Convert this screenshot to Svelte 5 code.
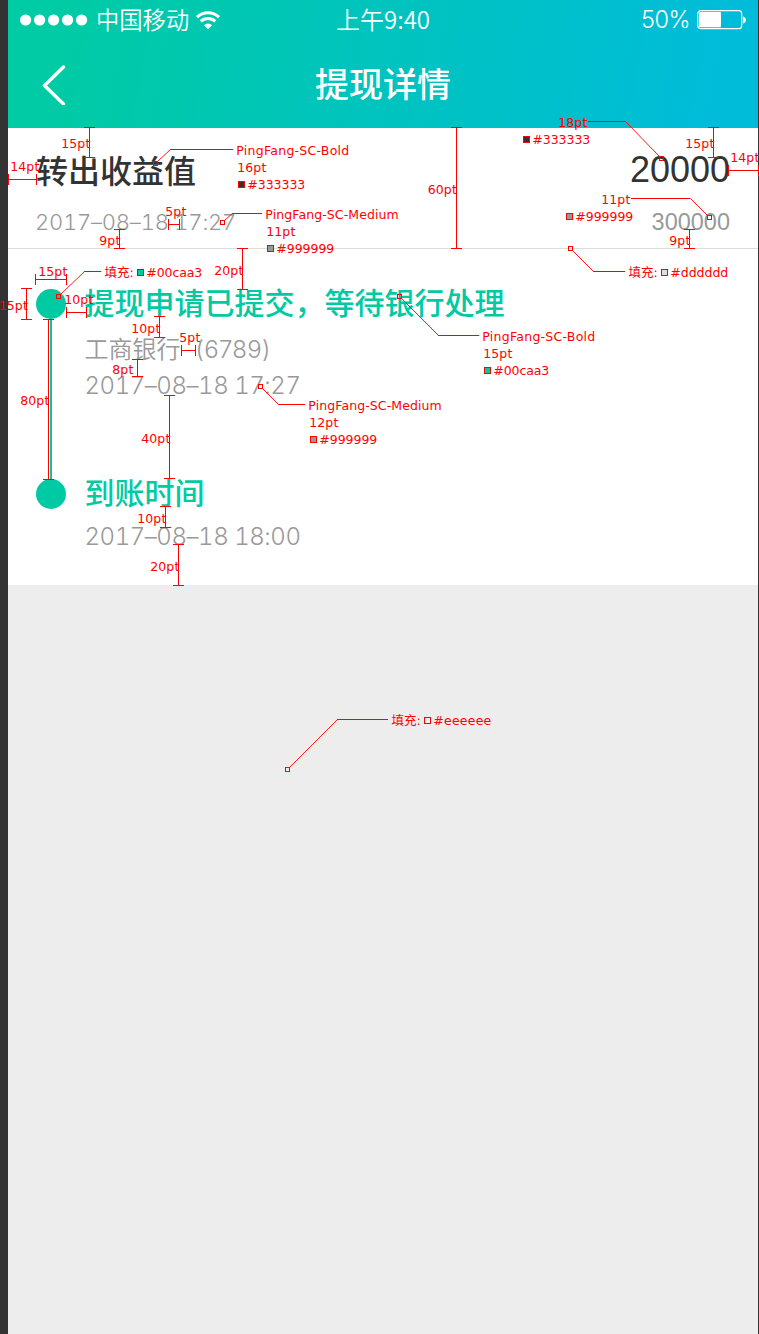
<script>
  const vertical = [
    [89, 127, 157], [119, 229, 248], [456, 127, 248], [713, 127, 157], [689, 229, 248],
    [242, 248, 289], [26, 288, 319], [159, 316, 337], [137, 359, 376], [48, 319, 479],
    [169, 395, 478], [165, 506, 527], [178, 544, 585]
  ];
  const horizontal = [
    [179, 8, 36], [224, 168, 179], [279, 35, 66], [312, 66, 86], [350, 181, 195], [170, 728, 758]
  ];
  const leaders = [
    [155, 163, 170, 149, 233], [222, 222, 232, 213, 262], [661, 158, 625, 121, 588],
    [709, 217, 690, 198, 631], [570, 248, 593, 271, 625], [58, 296, 84, 271, 101],
    [399, 296, 438, 335, 479], [260, 386, 278, 404, 305], [287, 769, 337, 719, 388]
  ];
  const swatches = [
    [238, 181, '#333333'], [267, 245, '#999999'], [523, 136, '#333333'], [566, 213, '#999999'],
    [661, 269, '#dddddd'], [137, 269, '#00caa3'], [484, 367, '#00caa3'], [310, 436, '#999999'],
    [424, 717, '#eeeeee']
  ];
  const labels = [
    [61, 148, 29, '15pt'], [10, 171, 29, '14pt'], [165, 216, 21, '5pt'], [99, 245, 21, '9pt'],
    [236, 155, 113, 'PingFang-SC-Bold'], [237, 172, 29, '16pt'], [247, 189, 58, '#333333'],
    [265, 219, 133.5, 'PingFang-SC-Medium'], [266, 236, 29, '11pt'], [276, 253, 58, '#999999'],
    [427.5, 194, 29, '60pt'], [558, 127, 29, '18pt'], [532, 144, 58, '#333333'],
    [685, 148, 29, '15pt'], [730, 162, 29, '14pt'], [601, 204, 29, '11pt'], [575, 221, 58, '#999999'],
    [669, 245, 21, '9pt'], [670, 277, 58, '#dddddd'], [38, 276, 29, '15pt'], [146, 277, 56, '#00caa3'],
    [214, 275, 29, '20pt'], [-1.5, 310, 29, '15pt'], [64, 304, 29, '10pt'], [131, 333, 29, '10pt'],
    [179, 342, 21, '5pt'], [112, 374, 21, '8pt'], [20, 405, 29, '80pt'], [141, 443, 29, '40pt'],
    [137, 523, 29, '10pt'], [150, 571, 29, '20pt'],
    [482, 341, 113, 'PingFang-SC-Bold'], [483, 358, 29, '15pt'], [493, 375, 56, '#00caa3'],
    [308, 410, 133.5, 'PingFang-SC-Medium'], [309, 427, 29, '12pt'], [319, 444, 58, '#999999'],
    [433, 725, 58, '#eeeeee']
  ];
  const fills = [[628, 277], [104, 277], [391, 725]];
  const steps = [
    { title: '提现申请已提交，等待银行处理', bank: true, time: '2017–08–18 17:27' },
    { title: '到账时间', bank: false, time: '2017–08–18 18:00' }
  ];
</script>

<div class="board">
  <main class="phone">
    <header>
      <div class="status">
        <div class="carrier">
          <svg width="68" height="12" viewBox="0 0 68 12" fill="#fff">
            {#each [0, 1, 2, 3, 4] as i}<circle cx={5.6 + i * 14} cy="6" r="5.6" />{/each}
          </svg>
          <span>中国移动</span>
          <svg class="wifi" width="24" height="19" viewBox="0 0 24 19" fill="none" stroke="#fff" stroke-width="2.9">
            <path d="M1 6.1A16 16 0 0 1 23 6.1M4.7 10.4A10.6 10.6 0 0 1 19.3 10.4" />
            <path d="M8 14.2A5.7 5.7 0 0 1 16 14.2L12 18.3Z" fill="#fff" stroke="none" />
          </svg>
        </div>
        <div class="clock">上午9:40</div>
        <div class="power">
          <span>50%</span>
          <svg width="50" height="20" viewBox="0 0 50 20">
            <rect x="0.7" y="0.7" width="44" height="18" rx="3" fill="none" stroke="#fff" stroke-width="1.2" />
            <rect x="2" y="2" width="22" height="15.3" rx="1" fill="#fff" />
            <path d="M46 6.5Q49 7.5 49 10T46 13.5Z" fill="#fff" />
          </svg>
        </div>
      </div>
      <div class="nav">
        <svg width="24" height="42" viewBox="0 0 24 42" fill="none" stroke="#fff" stroke-width="3.4" stroke-linecap="round" stroke-linejoin="round">
          <path d="M21.5 4L2.5 22.5L21.5 41" />
        </svg>
        <h1>提现详情</h1>
      </div>
    </header>

    <section class="summary">
      <div class="row main"><strong>转出收益值</strong><span class="amount">20000</span></div>
      <div class="row sub"><span class="date">2017–08–18 17:27</span><span class="balance">300000</span></div>
    </section>

    <section class="timeline">
      {#each steps as step}
        <div class="step">
          <div class="rail"><i class="dot"></i><i class="line"></i></div>
          <div class="body">
            <h2>{step.title}</h2>
            {#if step.bank}<p class="bank">工商银行<span>(6789)</span></p>{/if}
            <p class="time">{step.time}</p>
          </div>
        </div>
      {/each}
    </section>
  </main>

  <svg class="notes" width="759" height="1334" viewBox="0 0 759 1334">
    <g shape-rendering="crispEdges" fill="#ff0000">
      {#each vertical as [x, a, b]}
        <rect {x} y={a} width="1" height={b - a + 1} />
        <rect x={x - 5} y={a} width="11" height="1" />
        <rect x={x - 5} y={b} width="11" height="1" />
      {/each}
      {#each horizontal as [y, a, b]}
        <rect x={a} {y} width={b - a + 1} height="1" />
        <rect x={a} y={y - 5} width="1" height="11" />
        <rect x={b} y={y - 5} width="1" height="11" />
      {/each}
      {#each leaders as [mx, my, ex, ey, tx]}
        <rect x={Math.min(ex, tx)} y={ey} width={Math.abs(tx - ex)} height="1" />
        <rect x={mx - 1.5} y={my - 1.5} width="4" height="4" fill="none" stroke="#ff0000" />
      {/each}
      {#each swatches as [x, y, c]}
        <rect x={x + 0.5} y={y + 0.5} width="6" height="6" fill={c} stroke="#ff0000" />
      {/each}
    </g>
    {#each leaders as [mx, my, ex, ey]}
      <line
        x1={mx + 0.5 + 2.5 * Math.sign(ex - mx)}
        y1={my + 0.5 + 2.5 * Math.sign(ey - my)}
        x2={ex + 0.5} y2={ey + 0.5} stroke="#ff0000" stroke-width="0.9" />
    {/each}
    {#each labels as [x, y, w, t]}
      <text x={x + 0.3} {y} textLength={w}>{t}</text>
    {/each}
    {#each fills as [x, y]}
      <text class="cn" x={x + 0.5} {y}>填充</text>
      <text x={x + 25.5} {y}>:</text>
    {/each}
  </svg>
</div>

<style>
  .board {
    position: relative;
    box-sizing: border-box;
    width: 759px;
    height: 1334px;
    padding: 0 1px 0 8px;
    background: #333;
    overflow: hidden;
    font-family: "Noto Sans CJK SC", sans-serif;
  }
  .phone { height: 1334px; background: #ededed; }
  header {
    height: 128px;
    color: #fff;
    background: linear-gradient(100deg, #00cba5 8%, #00bcd9 94%);
  }
  .status {
    display: grid;
    grid-template-columns: 1fr auto 1fr;
    align-items: center;
    height: 40px;
    padding: 0 11px 0 12px;
    font-size: 23.3px;
    font-weight: 350;
    line-height: 38px;
  }
  .carrier, .power { display: flex; align-items: center; }
  .carrier span { margin: 0 7px 0 8px; padding-bottom: 2px; }
  .clock { font-size: 24px; padding-bottom: 2px; margin-left: -1px; }
  .power { justify-content: flex-end; gap: 7px; }
  .power span { font-family: Inter, sans-serif; font-size: 23.5px; letter-spacing: -0.5px; }
  .nav {
    display: grid;
    grid-template-columns: 24px 1fr 24px;
    align-items: center;
    height: 88px;
    padding: 0 34px;
  }
  h1 { margin: 0; text-align: center; font-size: 34px; line-height: 80px; font-weight: 500; }
  .nav h1 { padding-bottom: 2px; }
  .summary {
    box-sizing: border-box;
    height: 121px;
    padding: 18px 28px 0;
    background: #fff;
    border-bottom: 1px solid #ddd;
  }
  .row { display: flex; justify-content: space-between; align-items: center; }
  .main { height: 50px; color: #333; font-size: 32px; line-height: 50px; }
  .main strong { font-weight: 500; padding-bottom: 4px; }
  .amount { font: 36px/50px "Liberation Sans", sans-serif; padding-bottom: 2px; }
  .sub { height: 50px; color: #999; }
  .date { font: 350 22px/50px Inter, sans-serif; font-feature-settings: "tnum"; letter-spacing: -0.22px; margin: 2px 0 0 -1px; }
  .balance { font: 23.5px/50px "Liberation Sans", sans-serif; margin-top: 2px; }
  .timeline { box-sizing: border-box; height: 336px; padding: 40px 28px 0; background: #fff; }
  .step { display: flex; gap: 19px; height: 190px; }
  .step:last-child { height: 100px; }
  .rail { display: flex; flex-direction: column; align-items: center; width: 30px; }
  .dot { flex: none; width: 30px; height: 30px; border-radius: 50%; background: #00caa3; }
  .line { flex: 1; width: 2px; background: #00caa3; }
  .step:last-child .line { display: none; }
  .body { margin: -3px 0 0 -0.5px; }
  h2 { margin: 0; color: #00caa3; font-size: 30px; line-height: 30px; font-weight: 500; white-space: nowrap; }
  p { margin: 0; color: #999; }
  .bank { margin-top: 14px; font-size: 24px; line-height: 36px; font-weight: 350; }
  .bank span { margin-left: 15px; font-family: Inter, sans-serif; font-weight: 350; letter-spacing: 0.3px; }
  .time { font: 350 24px/36px Inter, sans-serif; font-feature-settings: "tnum"; letter-spacing: -0.45px; white-space: nowrap; }
  .step:last-child .time { margin-top: 13px; }
  .notes { position: absolute; left: 0; top: 0; }
  .notes text { font-family: "DejaVu Sans", sans-serif; font-size: 12.5px; fill: #ff0000; }
  .notes .cn { font-family: "Noto Sans CJK SC", sans-serif; font-size: 12.5px; }
</style>
